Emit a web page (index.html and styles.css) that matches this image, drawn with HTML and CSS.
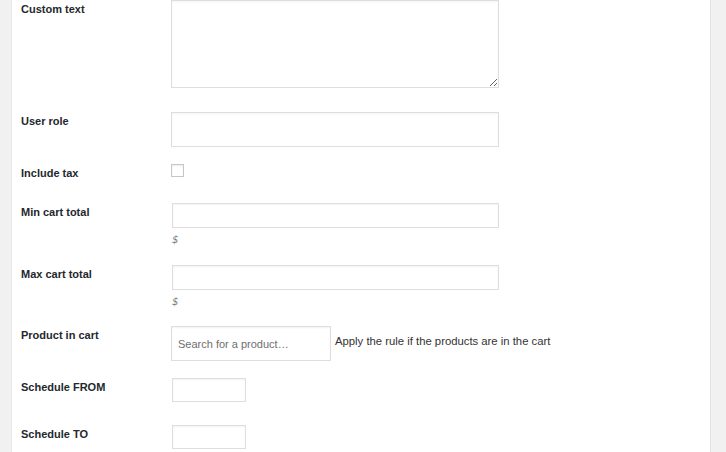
FILE: index.html
```html
<!DOCTYPE html>
<html lang="en">
<head>
<meta charset="utf-8">
<title>Rule settings</title>
<link rel="stylesheet" href="styles.css">
</head>
<body>
<div class="panel">
  <form class="form">
    <div class="row gap-lg">
      <label class="label">Custom text</label>
      <div class="field"><textarea class="textarea"></textarea></div>
    </div>
    <div class="row">
      <label class="label">User role</label>
      <div class="field"><input class="input input-tall" type="text"></div>
    </div>
    <div class="row gap-md">
      <label class="label">Include tax</label>
      <div class="field"><input class="checkbox" type="checkbox"></div>
    </div>
    <div class="row gap-sm">
      <label class="label">Min cart total</label>
      <div class="field">
        <input class="input input-short" type="text">
        <p class="desc">$</p>
      </div>
    </div>
    <div class="row">
      <label class="label">Max cart total</label>
      <div class="field">
        <input class="input input-short" type="text">
        <p class="desc">$</p>
      </div>
    </div>
    <div class="row">
      <label class="label">Product in cart</label>
      <div class="field field-inline">
        <input class="input input-search" type="text" placeholder="Search for a product…">
        <span class="hint">Apply the rule if the products are in the cart</span>
      </div>
    </div>
    <div class="row gap-from">
      <label class="label">Schedule FROM</label>
      <div class="field"><input class="input input-date" type="text"></div>
    </div>
    <div class="row">
      <label class="label">Schedule TO</label>
      <div class="field"><input class="input input-date" type="text"></div>
    </div>
  </form>
</div>
</body>
</html>
```

FILE: styles.css
```css
html, body {
  margin: 0;
  padding: 0;
  height: 100%;
}
body {
  background: #f1f1f1;
  font-family: "Liberation Sans", Arial, sans-serif;
  color: #23282d;
  overflow: hidden;
}
.panel {
  margin: 0 15px 0 11px;
  min-height: 100%;
  background: #fff;
  border-left: 1px solid #e8e8e8;
  border-right: 1px solid #e3e3e3;
  box-sizing: border-box;
}
.form {
  display: flex;
  flex-direction: column;
  gap: 17px;
  padding-left: 9px;
}
.row {
  display: grid;
  grid-template-columns: 150px 1fr;
  align-items: start;
}
.gap-lg { margin-bottom: 7px; }
.gap-md { margin-bottom: 6px; }
.gap-sm { margin-bottom: 1px; }
.gap-from { margin-bottom: 6px; }
.label {
  font-size: 11px;
  font-weight: bold;
  line-height: 13px;
  padding-top: 3px;
  color: #23282d;
}
.field {
  display: flex;
  flex-direction: column;
  align-items: flex-start;
}
.field-inline {
  flex-direction: row;
  align-items: center;
  gap: 4px;
}
.textarea,
.input,
.checkbox {
  margin: 0;
  box-sizing: border-box;
  background: #fff;
  border: 1px solid #dedede;
  box-shadow: inset 0 1px 2px rgba(0, 0, 0, 0.05);
  font-family: "Liberation Sans", Arial, sans-serif;
  outline: none;
}
.textarea {
  width: 328px;
  height: 88px;
  resize: vertical;
}
.input {
  display: block;
  width: 327px;
  font-size: 11px;
}
.input-tall {
  width: 328px;
  height: 35px;
}
.input-short {
  margin-left: 1px;
  height: 25px;
}
.input-search {
  width: 160px;
  height: 35px;
  padding: 0 6px;
  font-size: 11px;
  color: #333;
}
.input-search::placeholder {
  color: #6f6f6f;
}
.input-date {
  margin-left: 1px;
  width: 74px;
  height: 24px;
}
.checkbox {
  -webkit-appearance: none;
  appearance: none;
  width: 13px;
  height: 13px;
  border-color: #c6c6c6;
  border-radius: 0;
  box-shadow: inset 0 1px 2px rgba(0, 0, 0, 0.08);
}
.desc {
  margin: 5px 0 0 1px;
  font-family: "DejaVu Sans", "Liberation Sans", sans-serif;
  font-size: 10px;
  line-height: 14px;
  font-style: italic;
  color: #777;
}
.hint {
  font-size: 11.3px;
  line-height: 14px;
  color: #333;
  margin-top: -5px;
}
```
